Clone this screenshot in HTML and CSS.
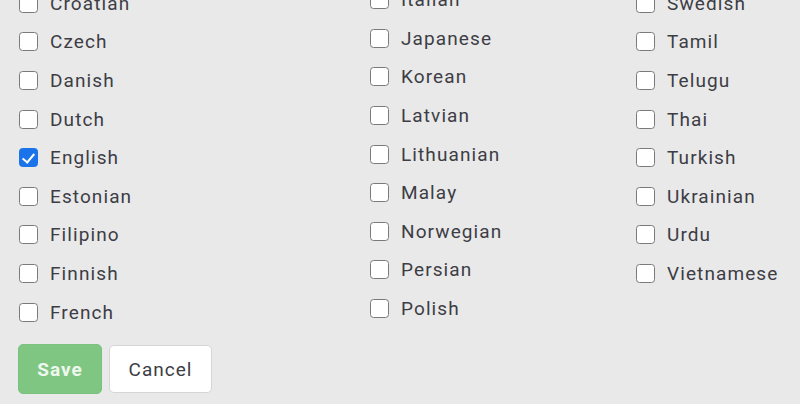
FILE: index.html
```html
<!DOCTYPE html>
<html>
<head>
<meta charset="utf-8">
<link rel="stylesheet" href="styles.css">
</head>
<body>
<div class="page">
  <div class="grid">
    <ul class="col col-left">
      <li><label><input type="checkbox"><span>Croatian</span></label></li>
      <li><label><input type="checkbox"><span>Czech</span></label></li>
      <li><label><input type="checkbox"><span>Danish</span></label></li>
      <li><label><input type="checkbox"><span>Dutch</span></label></li>
      <li><label><input type="checkbox" checked><span>English</span></label></li>
      <li><label><input type="checkbox"><span>Estonian</span></label></li>
      <li><label><input type="checkbox"><span>Filipino</span></label></li>
      <li><label><input type="checkbox"><span>Finnish</span></label></li>
      <li><label><input type="checkbox"><span>French</span></label></li>
    </ul>
    <ul class="col col-mid">
      <li><label><input type="checkbox"><span>Italian</span></label></li>
      <li><label><input type="checkbox"><span>Japanese</span></label></li>
      <li><label><input type="checkbox"><span>Korean</span></label></li>
      <li><label><input type="checkbox"><span>Latvian</span></label></li>
      <li><label><input type="checkbox"><span>Lithuanian</span></label></li>
      <li><label><input type="checkbox"><span>Malay</span></label></li>
      <li><label><input type="checkbox"><span>Norwegian</span></label></li>
      <li><label><input type="checkbox"><span>Persian</span></label></li>
      <li><label><input type="checkbox"><span>Polish</span></label></li>
    </ul>
    <ul class="col col-right">
      <li><label><input type="checkbox"><span>Swedish</span></label></li>
      <li><label><input type="checkbox"><span>Tamil</span></label></li>
      <li><label><input type="checkbox"><span>Telugu</span></label></li>
      <li><label><input type="checkbox"><span>Thai</span></label></li>
      <li><label><input type="checkbox"><span>Turkish</span></label></li>
      <li><label><input type="checkbox"><span>Ukrainian</span></label></li>
      <li><label><input type="checkbox"><span>Urdu</span></label></li>
      <li><label><input type="checkbox"><span>Vietnamese</span></label></li>
    </ul>
  </div>
  <div class="actions">
    <button class="btn btn-save" disabled>Save</button>
    <button class="btn btn-cancel">Cancel</button>
  </div>
</div>
</body>
</html>
```
FILE: styles.css
```css
html, body {
  margin: 0;
  padding: 0;
  background: #e9e9e9;
  overflow: hidden;
  height: 404px;
}
body {
  font-family: Roboto, "Liberation Sans", Arial, sans-serif;
  font-size: 19px;
  color: #3d3d45;
}
.page {
  margin-top: -16px;
  padding-left: 19px;
}
.grid {
  display: grid;
  grid-template-columns: 351px 266px 1fr;
  align-items: start;
}
.col {
  list-style: none;
  margin: 0;
  padding: 0;
}
.col-mid {
  margin-top: -3.5px;
}
.col li {
  height: 38.6px;
  display: flex;
  align-items: center;
}
.col label {
  display: flex;
  align-items: center;
  gap: 12px;
  letter-spacing: 1.1px;
}
.col input {
  appearance: none;
  -webkit-appearance: none;
  margin: 0;
  width: 19px;
  height: 19px;
  box-sizing: border-box;
  border: 1.7px solid #7a7a7a;
  border-radius: 3.5px;
  background: #fff;
  position: relative;
  flex: none;
}
.col input:checked {
  background: #1a73e8;
  border-color: #1a73e8;
}
.col input:checked::after {
  content: "";
  position: absolute;
  left: 5px;
  top: 1.5px;
  width: 5px;
  height: 10px;
  border: solid #fff;
  border-width: 0 2.4px 2.4px 0;
  transform: rotate(40deg);
}
.actions {
  display: flex;
  gap: 7px;
  margin-top: 13px;
  margin-left: -1px;
  align-items: center;
}
.btn {
  font-family: Roboto, "Liberation Sans", Arial, sans-serif;
  font-size: 19px;
  letter-spacing: 1px;
  border-radius: 5px;
  height: 50px;
  padding: 0;
}
.btn-save {
  width: 84px;
  background: #80c683;
  border: 1px solid #7cc27f;
  color: #eef8ee;
  font-weight: bold;
}
.btn-cancel {
  width: 103px;
  height: 48px;
  background: #fff;
  border: 1px solid #d6d6d6;
  color: #3d3d45;
}
```
